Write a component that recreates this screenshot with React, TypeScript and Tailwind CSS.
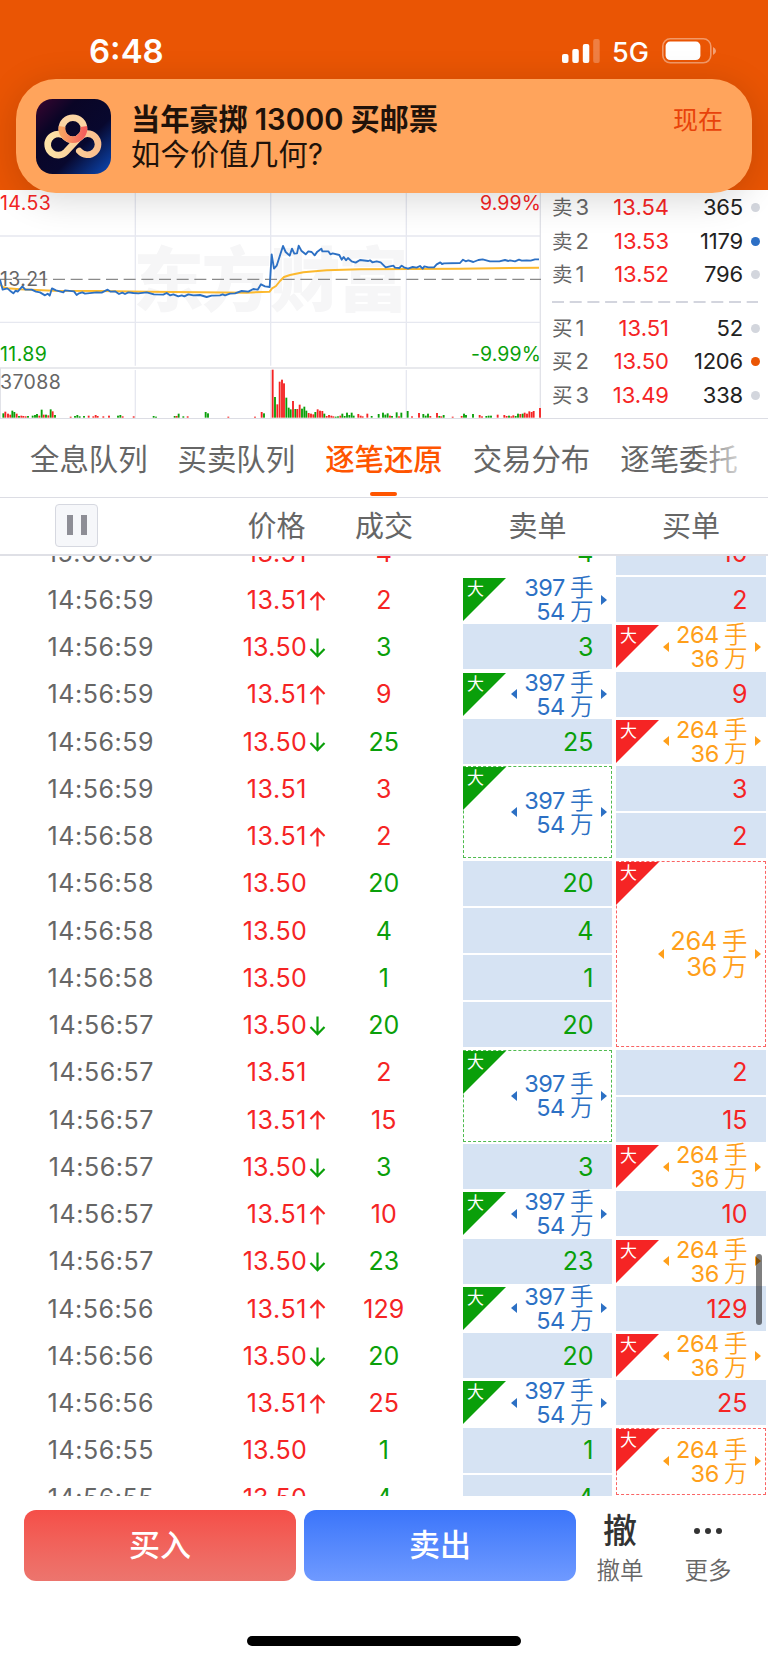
import clsx from "clsx";

type Tone = "r" | "g";
type Arrow = "up" | "down" | "";

type Trade = { time: string; price: string; arrow: Arrow; volume: string; tone: Tone };

type Cell =
    | { kind: "plain"; value: string; blank?: boolean }
    | { kind: "big"; span?: number; noLeft?: boolean; cut?: boolean };

const asks = [
    { label: "卖", level: 3, price: "13.54", volume: "365", dot: "bg-[#d3d6dd]" },
    { label: "卖", level: 2, price: "13.53", volume: "1179", dot: "bg-[#2c6fc5]" },
    { label: "卖", level: 1, price: "13.52", volume: "796", dot: "bg-[#d3d6dd]" },
];

const bids = [
    { label: "买", level: 1, price: "13.51", volume: "52", dot: "bg-[#d3d6dd]" },
    { label: "买", level: 2, price: "13.50", volume: "1206", dot: "bg-[#ea5504]" },
    { label: "买", level: 3, price: "13.49", volume: "338", dot: "bg-[#d3d6dd]" },
];

const tabs = ["全息队列", "买卖队列", "逐笔还原", "交易分布", "逐笔委托"];

const trades: Trade[] = [
    { time: "15:00:00", price: "13.51", arrow: "", volume: "4", tone: "r" },
    { time: "14:56:59", price: "13.51", arrow: "up", volume: "2", tone: "r" },
    { time: "14:56:59", price: "13.50", arrow: "down", volume: "3", tone: "g" },
    { time: "14:56:59", price: "13.51", arrow: "up", volume: "9", tone: "r" },
    { time: "14:56:59", price: "13.50", arrow: "down", volume: "25", tone: "g" },
    { time: "14:56:59", price: "13.51", arrow: "", volume: "3", tone: "r" },
    { time: "14:56:58", price: "13.51", arrow: "up", volume: "2", tone: "r" },
    { time: "14:56:58", price: "13.50", arrow: "", volume: "20", tone: "g" },
    { time: "14:56:58", price: "13.50", arrow: "", volume: "4", tone: "g" },
    { time: "14:56:58", price: "13.50", arrow: "", volume: "1", tone: "g" },
    { time: "14:56:57", price: "13.50", arrow: "down", volume: "20", tone: "g" },
    { time: "14:56:57", price: "13.51", arrow: "", volume: "2", tone: "r" },
    { time: "14:56:57", price: "13.51", arrow: "up", volume: "15", tone: "r" },
    { time: "14:56:57", price: "13.50", arrow: "down", volume: "3", tone: "g" },
    { time: "14:56:57", price: "13.51", arrow: "up", volume: "10", tone: "r" },
    { time: "14:56:57", price: "13.50", arrow: "down", volume: "23", tone: "g" },
    { time: "14:56:56", price: "13.51", arrow: "up", volume: "129", tone: "r" },
    { time: "14:56:56", price: "13.50", arrow: "down", volume: "20", tone: "g" },
    { time: "14:56:56", price: "13.51", arrow: "up", volume: "25", tone: "r" },
    { time: "14:56:55", price: "13.50", arrow: "", volume: "1", tone: "g" },
    { time: "14:56:55", price: "13.50", arrow: "", volume: "4", tone: "g" },
];

const sellCells: Cell[] = [
    { kind: "plain", value: "4", blank: true },
    { kind: "big", noLeft: true },
    { kind: "plain", value: "3" },
    { kind: "big" },
    { kind: "plain", value: "25" },
    { kind: "big", span: 2 },
    { kind: "plain", value: "20" },
    { kind: "plain", value: "4" },
    { kind: "plain", value: "1" },
    { kind: "plain", value: "20" },
    { kind: "big", span: 2 },
    { kind: "plain", value: "3" },
    { kind: "big" },
    { kind: "plain", value: "23" },
    { kind: "big" },
    { kind: "plain", value: "20" },
    { kind: "big" },
    { kind: "plain", value: "1" },
    { kind: "plain", value: "4" },
];

const buyCells: Cell[] = [
    { kind: "plain", value: "10" },
    { kind: "plain", value: "2" },
    { kind: "big" },
    { kind: "plain", value: "9" },
    { kind: "big" },
    { kind: "plain", value: "3" },
    { kind: "plain", value: "2" },
    { kind: "big", span: 4 },
    { kind: "plain", value: "2" },
    { kind: "plain", value: "15" },
    { kind: "big" },
    { kind: "plain", value: "10" },
    { kind: "big" },
    { kind: "plain", value: "129" },
    { kind: "big" },
    { kind: "plain", value: "25" },
    { kind: "big", cut: true },
];

const priceLine =
    "0,284 8,314 22,310 30,317 40,325 47,317 53,320 67,304 76,314 95,314 108,320 120,322 135,331 143,326 149,332 156,310 168,316 190,322 195,316 222,319 230,330 237,325 247,322 255,326 290,322 305,323 323,314 332,320 345,319 357,327 367,323 375,327 385,322 400,324 415,325 440,322 462,328 490,329 500,324 510,331 520,328 535,334 545,331 553,334 565,328 580,331 600,330 620,336 635,332 660,331 668,328 675,331 690,326 705,325 725,318 745,320 760,312 773,314 783,298 795,304 809,306 815,208 822,251 830,242 849,183 857,201 869,212 876,191 883,206 891,205 896,182 904,197 917,208 925,199 935,201 944,211 952,200 964,191 967,199 985,199 991,208 998,205 1018,210 1025,224 1031,216 1038,226 1044,219 1055,229 1067,233 1080,225 1105,228 1110,226 1117,232 1130,229 1142,232 1157,247 1180,242 1185,248 1198,249 1205,242 1212,247 1224,251 1238,246 1250,248 1260,243 1268,251 1273,244 1285,247 1302,247 1310,238 1321,232 1326,237 1332,235 1380,234 1389,224 1397,229 1405,226 1420,231 1435,225 1448,223 1470,229 1498,229 1515,225 1525,228 1530,226 1545,229 1557,224 1565,227 1580,226 1592,227 1605,223 1617,223";

const averageLine =
    "0,298 8,306 22,310 60,313 160,317 300,318 440,320 600,322 740,323 809,320 816,310 828,303 840,288 852,276 870,270 910,262 980,256 1080,253 1230,252 1380,251 1480,250 1617,248";

// x, height, tone
const volumeBars =
    "10,13,g 16,18,r 24,12,r 31,9,r 37,21,g 43,17,g 50,12,r 57,5,g 64,6,r 70,5,r 77,4,r 84,5,g 98,6,g 105,8,g 111,11,g 118,6,r 125,24,g 131,9,r 138,9,g 145,7,r 152,25,g 158,19,r 165,8,g 212,3,r 225,5,g 232,8,g 239,4,g 252,5,g 266,6,r 280,4,r 287,8,r 293,5,r 310,4,r 327,6,r 354,6,g 361,8,g 368,4,r 401,4,r 461,5,g 468,3,g 524,5,g 530,5,r 536,12,g 550,4,g 563,4,r 617,17,g 624,13,g 685,3,r 765,3,r 785,17,r 792,13,g 818,144,r 825,62,g 832,40,r 839,108,r 846,114,r 852,103,r 859,60,g 866,30,g 872,25,g 879,50,r 886,26,g 892,26,r 899,39,r 906,27,g 913,33,g 919,21,g 926,14,r 933,12,r 940,10,r 946,17,g 953,25,r 960,21,r 967,20,r 973,12,g 980,5,r 987,8,r 994,6,r 1000,4,r 1007,3,g 1014,4,g 1021,6,r 1027,12,g 1034,5,g 1041,15,g 1048,8,g 1055,15,g 1061,6,g 1075,11,r 1082,6,r 1088,4,r 1102,12,r 1115,5,g 1136,11,g 1149,15,g 1156,9,g 1163,13,g 1170,6,r 1176,5,g 1190,16,g 1197,4,r 1204,15,g 1223,20,g 1236,4,r 1257,14,r 1270,11,g 1277,6,g 1284,12,g 1291,5,r 1311,14,r 1318,5,g 1324,4,r 1331,8,g 1358,3,r 1385,5,r 1392,12,g 1398,8,g 1419,11,g 1439,8,r 1446,4,r 1459,5,g 1466,6,g 1473,6,g 1493,9,r 1513,8,r 1520,5,r 1527,6,g 1534,4,r 1540,7,r 1547,5,g 1554,12,g 1561,11,r 1568,12,g 1574,15,r 1581,12,r 1588,19,r 1595,17,r 1601,20,r 1620,29,r"
        .split(" ")
        .map((bar) => bar.split(","));

function StatusBar() {
    return (
        <div className="flex h-[79px] items-start pt-[31px] pl-[89px] text-white">
            <span className="w-[473px] text-[33px] leading-[41px] font-semibold">6:48</span>
            <svg width="38" height="24" viewBox="0 0 38 24" className="mt-2 shrink-0" fill="white">
                <rect x="0" y="15" width="6.5" height="9" rx="2" />
                <rect x="10.3" y="10" width="6.5" height="14" rx="2" />
                <rect x="20.8" y="5" width="6.5" height="19" rx="2" />
                <rect x="31.2" y="0" width="6.5" height="24" rx="2" opacity="0.25" />
            </svg>
            <span className="ml-3 w-[50px] text-[27px] leading-[43px] font-medium">5G</span>
            <svg width="54" height="26" viewBox="0 0 54 26" className="mt-[7px] shrink-0">
                <rect x="0.8" y="0.8" width="48" height="24" rx="7.5" fill="none" stroke="white" strokeOpacity="0.4" strokeWidth="1.6" />
                <rect x="3.6" y="3.6" width="34.8" height="18.4" rx="4.5" fill="white" />
                <path d="M51 9 Q54 10.5 54 13 Q54 15.5 51 17Z" fill="white" fillOpacity="0.45" />
            </svg>
        </div>
    );
}

function AppIcon() {
    return (
        <svg width="75" height="75" viewBox="0 0 75 75" className="shrink-0">
            <defs>
                <linearGradient id="tile" x1="0" y1="0" x2="1" y2="1">
                    <stop offset="0" stopColor="#3a0530" />
                    <stop offset="0.28" stopColor="#0a0526" />
                    <stop offset="0.62" stopColor="#08082e" />
                    <stop offset="1" stopColor="#0b4ab8" />
                </linearGradient>
                <linearGradient id="knot" x1="0" y1="0" x2="1" y2="0">
                    <stop offset="0" stopColor="#fde3a8" />
                    <stop offset="1" stopColor="#fbbf8e" />
                </linearGradient>
                <linearGradient id="ring" x1="0" y1="0" x2="1" y2="0">
                    <stop offset="0" stopColor="#f9a262" />
                    <stop offset="1" stopColor="#f4605c" />
                </linearGradient>
            </defs>
            <rect width="75" height="75" rx="16.5" fill="url(#tile)" />
            <path
                d="M43.3 52A10.6 10.6 0 1 0 43.5 38.2L29.8 53A10.6 10.6 0 1 1 27 36.1"
                fill="none"
                stroke="url(#knot)"
                strokeWidth="6.6"
                strokeLinecap="round"
            />
            <circle cx="36.9" cy="29.8" r="11.1" fill="none" stroke="#fbd5a4" strokeWidth="6.6" />
            <path d="M26 27.5A11.1 11.1 0 1 0 47.8 27.5" fill="none" stroke="url(#ring)" strokeWidth="6.6" />
        </svg>
    );
}

function Notification() {
    return (
        <div className="relative z-20 mx-4 flex h-[114px] items-start rounded-[40px] bg-[#ffa45c] pt-[19.5px] pl-5 shadow-[0_6px_36px_rgba(0,0,0,0.16)]">
            <AppIcon />
            <div className="ml-5 flex-1 pt-[3px] text-[29.2px] leading-[35px] text-[#20120a]">
                <div className="font-semibold">
                    当年豪掷<span className="mr-[7px] ml-[7px]">13000</span>买邮票
                </div>
                <div className="tracking-[0.3px]">如今价值几何?</div>
            </div>
            <span className="mr-[29px] text-[25px] leading-[42px] text-[#e8420a]">现在</span>
        </div>
    );
}

function Chart() {
    return (
        <div className="relative w-[541px] shrink-0 text-[19.5px] leading-6 tracking-[0.4px]">
            <svg width="541" height="228" viewBox="0 15 1623 684" className="block">
                <text x="400" y="364" fontSize="212" fontWeight="900" textLength="826" fill="#f6f6f7">
                    东方财富
                </text>
                <g stroke="#e6e8f0" strokeWidth="4">
                    <path d="M0 153H1623M0 412H1623" />
                    <path d="M406 15V542M812 15V542M1219 15V542M406 555V699M812 555V699M1219 555V699" />
                    <path d="M0 549H1623M1621 15V699M1 549V699" stroke="#e1e2e8" />
                </g>
                <path d="M0 283H1623" stroke="#8a8a8a" strokeWidth="3.4" strokeDasharray="36 17" />
                <polyline points={averageLine} fill="none" stroke="#fcb92e" strokeWidth="6" strokeLinejoin="round" />
                <polyline points={priceLine} fill="none" stroke="#2c70c4" strokeWidth="5.6" strokeLinejoin="round" />
                {volumeBars.map(([x, h, tone]) => (
                    <rect
                        key={x}
                        x={Number(x) - 2.8}
                        y={698 - Number(h)}
                        width="5.6"
                        height={h}
                        fill={tone === "r" ? "#f52424" : "#0a9f0a"}
                    />
                ))}
            </svg>
            <span className="absolute top-[1px] left-0 text-[#f52424]">14.53</span>
            <span className="absolute top-[1px] right-0 tracking-[0.1px] text-[#f52424]">9.99%</span>
            <span className="absolute top-[77px] left-0 text-[#666]">13.21</span>
            <span className="absolute top-[152px] left-0 text-[#0a9f0a]">11.89</span>
            <span className="absolute top-[152px] right-0 tracking-[0.1px] text-[#0a9f0a]">-9.99%</span>
            <span className="absolute top-[180px] left-0 text-[#666]">37088</span>
        </div>
    );
}

function Quote({ label, level, price, volume, dot }: (typeof asks)[number]) {
    return (
        <div className="flex h-[33.5px] items-center text-[22px]">
            <span className="w-[42px] text-[20.5px] whitespace-nowrap text-[#666]">
                {label}
                <span className="ml-[3px] text-[22px]">{level}</span>
            </span>
            <span className="w-[75px] text-right text-[#f52424]">{price}</span>
            <span className="flex-1 text-right tracking-[-0.2px] text-[#222]">{volume}</span>
            <span className={clsx("ml-2 size-[9px] rounded-full", dot)} />
        </div>
    );
}

function OrderBook() {
    return (
        <div className="flex-1 pt-[1px] pr-2 pl-[11px]">
            {asks.map((q) => (
                <Quote key={q.price} {...q} />
            ))}
            <svg width="206" height="2" className="mt-[9px] mb-[9px] block">
                <path d="M0 1H206" stroke="#d3d5de" strokeWidth="2" strokeDasharray="12 5.7" />
            </svg>
            {bids.map((q) => (
                <Quote key={q.price} {...q} />
            ))}
        </div>
    );
}

function Tabs() {
    return (
        <div className="relative flex h-[79px] gap-[30px] overflow-hidden border-b border-[#dcdde4] pl-[30px] text-[29.4px] whitespace-nowrap text-[#666]">
            {tabs.map((tab, i) => (
                <div
                    key={tab}
                    className={clsx("relative flex h-full shrink-0 pt-[19px] leading-[44px]", i === 2 && "font-medium text-[#ff5500]")}
                >
                    {tab}
                    {i === 2 && <span className="absolute bottom-[1px] left-[45px] h-1 w-[27px] rounded-full bg-[#ff5500]" />}
                </div>
            ))}
            <div className="absolute top-0 right-0 h-full w-[70px] bg-gradient-to-r from-white/0 to-white to-80%" />
        </div>
    );
}

function ColumnHeads() {
    return (
        <div className="flex h-[58px] items-center border-b-2 border-[#dfe0e6] text-[29px] text-[#666]">
            <div className="w-[229px] pb-[2px] pl-[55px]">
                <div className="flex size-[43px] items-center justify-center gap-2 rounded-[4px] border border-[#d6d8e0] bg-[#f6f7fa]">
                    <span className="h-5 w-1.5 bg-[#8e8e96]" />
                    <span className="h-5 w-1.5 bg-[#8e8e96]" />
                </div>
            </div>
            <span className="w-[95px] pt-[2px] text-center">价格</span>
            <span className="w-[120px] pt-[2px] text-center">成交</span>
            <span className="ml-[19px] w-[149px] pt-[2px] text-center">卖单</span>
            <span className="ml-1 w-[150px] pt-[2px] text-center">买单</span>
        </div>
    );
}

function PriceArrow({ arrow }: { arrow: Arrow }) {
    if (!arrow) return null;
    return (
        <svg
            width="17"
            height="20"
            viewBox="0 0 17 20"
            className={arrow === "up" ? "text-[#f52424]" : "rotate-180 text-[#0a9f0a]"}
            fill="none"
            stroke="currentColor"
            strokeWidth="2.2"
        >
            <path d="M8.5 19.5V2M1.5 9L8.5 1.8L15.5 9" />
        </svg>
    );
}

function TradeRow({ time, price, arrow, volume, tone }: Trade) {
    return (
        <div className="flex h-[47.25px] items-center">
            <span className="w-[154px] text-right tracking-[0.55px] text-[#666]">{time}</span>
            <span className={clsx("w-[153px] text-right text-[#f52424]", price.endsWith("1") ? "tracking-[0.6px]" : "tracking-[0.3px]")}>
                {price}
            </span>
            <span className="w-[17px] pl-[1.5px]">
                <PriceArrow arrow={arrow} />
            </span>
            <span className={clsx("w-[119.5px] text-center", tone === "r" ? "text-[#f52424]" : "text-[#0a9f0a]")}>{volume}</span>
        </div>
    );
}

function OrderCell({ cell, side }: { cell: Cell; side: "sell" | "buy" }) {
    const sell = side === "sell";

    if (cell.kind === "plain") {
        return (
            <div
                className={clsx(
                    "mb-[2.25px] flex h-[45px] shrink-0 items-center justify-end pt-[2px] pr-[18.5px]",
                    !cell.blank && "bg-[#d6e3f3]",
                    sell ? "text-[#0a9f0a]" : "text-[#f52424]"
                )}
            >
                {cell.value}
            </div>
        );
    }

    const tall = cell.span === 4;
    return (
        <div
            className={clsx(
                "relative mb-[2.25px] flex shrink-0 items-center justify-end pr-[5px]",
                cell.cut ? "h-[67.5px]" : tall ? "h-[186.75px]" : cell.span === 2 ? "h-[92.25px]" : "h-[45px]",
                (cell.span || cell.cut) && "outline-[1.5px] -outline-offset-1 outline-dashed",
                sell ? "text-[#2c70c4] outline-[#4fbb4f]" : "text-[#ff9f1a] outline-[#fa6464]"
            )}
        >
            <svg width="43" height="43" viewBox="0 0 43 43" className="absolute top-[1px] left-0">
                <path d="M0 0H43L0 43Z" fill={sell ? "#0a9f0a" : "#f52424"} />
            </svg>
            <span className="absolute top-0 left-1 text-[17px] leading-[25px] text-white">大</span>
            {!cell.noLeft && (
                <svg width="6" height="10" viewBox="0 0 6 10" className={tall ? "mr-[6px]" : "mr-[7px]"}>
                    <path d="M6 0V10L0 5Z" fill="currentColor" />
                </svg>
            )}
            <div
                className={clsx(
                    "pt-[1px] text-right",
                    tall ? "text-[25.5px] leading-[26px] tracking-[-0.4px]" : "text-[23.5px] leading-[24px] tracking-[-0.4px]"
                )}
            >
                <div>
                    {sell ? "397" : "264"}
                    <span className="ml-[5px] font-[350]">手</span>
                </div>
                <div>
                    {sell ? "54" : "36"}
                    <span className="ml-[5px] font-[350]">万</span>
                </div>
            </div>
            <svg width="6" height="10" viewBox="0 0 6 10" className="ml-[8px]">
                <path d="M0 0V10L6 5Z" fill="currentColor" />
            </svg>
        </div>
    );
}

function TradeList() {
    return (
        <div className="relative h-[940px] overflow-hidden text-[25px]">
            <div className="-mt-[26.25px] flex">
                <div className="w-[463px]">
                    {trades.map((t, i) => (
                        <TradeRow key={i} {...t} />
                    ))}
                </div>
                <div className="flex w-[149px] flex-col">
                    {sellCells.map((c, i) => (
                        <OrderCell key={i} cell={c} side="sell" />
                    ))}
                </div>
                <div className="ml-1 flex w-[150px] flex-col">
                    {buyCells.map((c, i) => (
                        <OrderCell key={i} cell={c} side="buy" />
                    ))}
                </div>
            </div>
            <div className="absolute top-[698px] right-[6px] h-[71px] w-[6px] rounded-full bg-black/50" />
        </div>
    );
}

function ActionBar() {
    return (
        <div className="flex h-[85px] items-start gap-2 pt-[14px] pl-6">
            <button className="h-[71px] w-[272px] rounded-xl bg-gradient-to-b from-[#f54e48] to-[#ec756e] text-[31px] font-medium text-white">
                买入
            </button>
            <button className="h-[71px] w-[272px] rounded-xl bg-gradient-to-b from-[#3b75fa] to-[#6f9aff] text-[31px] font-medium text-white">
                卖出
            </button>
            <div className="flex w-[72px] flex-col items-center pt-[1px] text-[#666]">
                <span className="text-[34px] leading-[40px] font-medium text-[#333]">撤</span>
                <span className="text-[23.5px] leading-[40px] font-[350]">撤单</span>
            </div>
            <div className="flex w-[88px] flex-col items-center pt-[1px] text-[#666]">
                <span className="flex h-10 items-center gap-[5px]">
                    <span className="size-[6px] rounded-full bg-[#333]" />
                    <span className="size-[6px] rounded-full bg-[#333]" />
                    <span className="size-[6px] rounded-full bg-[#333]" />
                </span>
                <span className="text-[23.5px] leading-[40px] font-[350]">更多</span>
            </div>
        </div>
    );
}

export default function App() {
    return (
        <div className="h-[1663px] w-[768px] overflow-hidden bg-white font-['Inter','Noto_Sans_CJK_SC',sans-serif]">
            <header className="h-[190px] bg-[#ea5504]">
                <StatusBar />
                <Notification />
            </header>
            <section className="flex h-[229px] border-b border-[#dcdde4] bg-white">
                <Chart />
                <OrderBook />
            </section>
            <Tabs />
            <ColumnHeads />
            <TradeList />
            <ActionBar />
            <div className="mx-auto mt-[55px] h-[10px] w-[274px] rounded-full bg-black" />
        </div>
    );
}
